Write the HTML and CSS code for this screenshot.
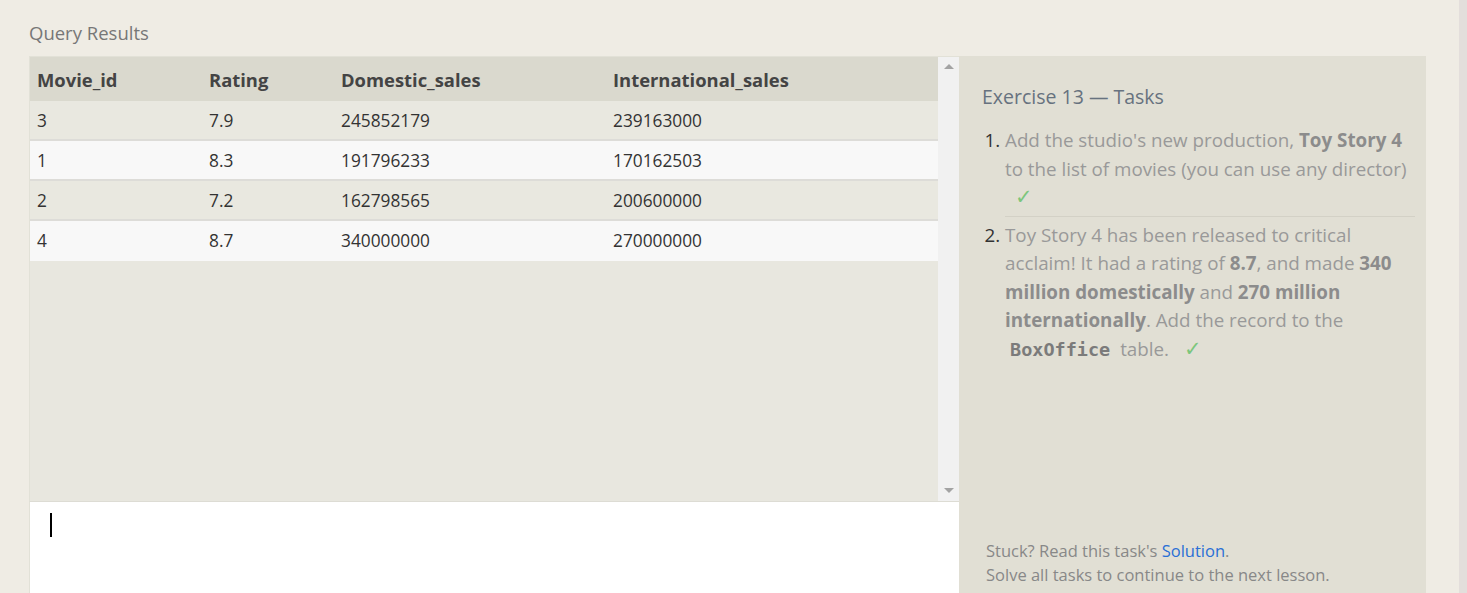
FILE: index.html
```html
<!DOCTYPE html>
<html lang="en">
<head>
<meta charset="utf-8">
<title>Query Results</title>
<link rel="stylesheet" href="styles.css">
</head>
<body>
<div class="app">
  <div class="content">
    <h2 class="results-title">Query Results</h2>
    <div class="row">
      <section class="workspace">
        <div class="results">
          <div class="results-scroll">
            <table class="results-table">
              <thead>
                <tr><th>Movie_id</th><th>Rating</th><th>Domestic_sales</th><th>International_sales</th></tr>
              </thead>
              <tbody>
                <tr><td>3</td><td>7.9</td><td>245852179</td><td>239163000</td></tr>
                <tr><td>1</td><td>8.3</td><td>191796233</td><td>170162503</td></tr>
                <tr><td>2</td><td>7.2</td><td>162798565</td><td>200600000</td></tr>
                <tr><td>4</td><td>8.7</td><td>340000000</td><td>270000000</td></tr>
              </tbody>
            </table>
          </div>
          <div class="scrollbar">
            <span class="arrow arrow-up"></span>
            <span class="arrow arrow-down"></span>
          </div>
        </div>
        <div class="editor"><span class="caret"></span></div>
      </section>
      <aside class="tasks">
        <h3 class="tasks-title">Exercise 13 — Tasks</h3>
        <ol class="task-list">
          <li class="task">Add the studio's new production, <strong>Toy Story 4</strong> to the list of movies (you can use any director) <span class="check">✓</span></li>
          <li class="task">Toy Story 4 has been released to critical acclaim! It had a rating of <strong>8.7</strong>, and made <strong>340 million domestically</strong> and <strong>270 million internationally</strong>. Add the record to the <code class="code">BoxOffice</code> table. <span class="check">✓</span></li>
        </ol>
        <div class="tasks-footer">
          <p class="footer-line">Stuck? Read this task's <a class="link" href="#">Solution</a>.</p>
          <p class="footer-line">Solve all tasks to continue to the next lesson.</p>
        </div>
      </aside>
    </div>
  </div>
  <div class="page-scroll"></div>
</div>
</body>
</html>
```
FILE: styles.css
```css
html, body {
  margin: 0;
  padding: 0;
  height: 100%;
  overflow: hidden;
}
body {
  background: #efece4;
  font-family: "Open Sans", "Liberation Sans", sans-serif;
  color: #333;
}
.app {
  display: flex;
  height: 100%;
}
.content {
  flex: 1;
  padding-left: 29px;
  display: flex;
  flex-direction: column;
}
.results-title {
  flex-shrink: 0;
  margin: 0;
  height: 56px;
  box-sizing: border-box;
  padding-top: 20px;
  font-size: 18.5px;
  font-weight: 400;
  line-height: 26px;
  color: #777;
}
.row {
  display: flex;
  flex-shrink: 0;
}
.workspace {
  width: 930px;
  display: flex;
  flex-direction: column;
}
.results {
  display: flex;
  height: 445px;
  background: #e8e7df;
  border-left: 1px solid #e2e1d7;
  border-top: 1px solid #e2e1d7;
  box-sizing: border-box;
}
.results-scroll {
  flex: 1;
}
.results-table {
  width: 100%;
  border-collapse: collapse;
  font-size: 17.3px;
}
.results-table th {
  background: #dad9ce;
  text-align: left;
  font-weight: 700;
  color: #444;
  height: 43px;
  padding: 1px 7px 0;
  font-size: 18.4px;
}
.results-table td {
  height: 37px;
  padding: 1px 7px 0;
  color: #333;
  border-bottom: 2px solid #dddcd8;
}
.results-table tbody tr:nth-child(odd) td {
  background: #e9e8e0;
}
.results-table tbody tr:nth-child(even) td {
  background: #f8f8f8;
}
.results-table tbody tr:last-child td {
  border-bottom-color: #f8f8f8;
}
.results-table th:nth-child(1) { width: 158px; }
.results-table th:nth-child(2) { width: 118px; }
.results-table th:nth-child(3) { width: 258px; }
.scrollbar {
  width: 21px;
  background: #f1f1f1;
  position: relative;
}
.arrow {
  position: absolute;
  left: 6px;
  width: 0;
  height: 0;
  border-left: 5px solid transparent;
  border-right: 5px solid transparent;
}
.arrow-up {
  top: 7px;
  border-bottom: 5px solid #a3a3a3;
}
.arrow-down {
  bottom: 8px;
  border-top: 5px solid #a3a3a3;
}
.editor {
  height: 130px;
  background: #fff;
  border-top: 1px solid #dddcd4;
  border-left: 1px solid #e2e1d7;
  padding: 11px 0 0 20px;
  box-sizing: border-box;
}
.caret {
  display: block;
  width: 2px;
  height: 24px;
  background: #000;
}
.tasks {
  width: 467px;
  box-sizing: border-box;
  background: #e1dfd4;
  padding: 28px 11px 29px 23px;
  height: 560px;
  display: flex;
  flex-direction: column;
  color: #999;
}
.tasks-title {
  margin: 0;
  font-size: 19.5px;
  font-weight: 400;
  line-height: 26px;
  color: #67727f;
}
.task-list {
  margin: 16px 0 0;
  padding-left: 23px;
  font-size: 18.8px;
  line-height: 28.5px;
}
.task {
  padding: 0 0 4px;
}
.task::marker {
  color: #333;
}
.task + .task {
  border-top: 1px solid #d3d1c6;
  padding-top: 4px;
}
.task strong {
  font-weight: 700;
  color: #8c8c8c;
}
.code {
  font-family: "DejaVu Sans Mono", "Liberation Mono", monospace;
  font-weight: 700;
  font-size: 18.5px;
  line-height: 1;
  color: #7b7b7b;
  padding: 0 5px;
}
.check {
  color: #7cc67c;
  font-size: 21px;
  line-height: 1;
  margin-left: 10px;
}
.tasks-footer {
  margin-top: auto;
  padding-left: 4px;
  font-size: 16.5px;
  line-height: 24px;
  color: #888;
}
.footer-line {
  margin: 0;
}
.link {
  color: #2a6fd6;
  text-decoration: none;
}
.page-scroll {
  width: 8px;
  margin-left: 33px;
  background: #e3dedb;
}
```
